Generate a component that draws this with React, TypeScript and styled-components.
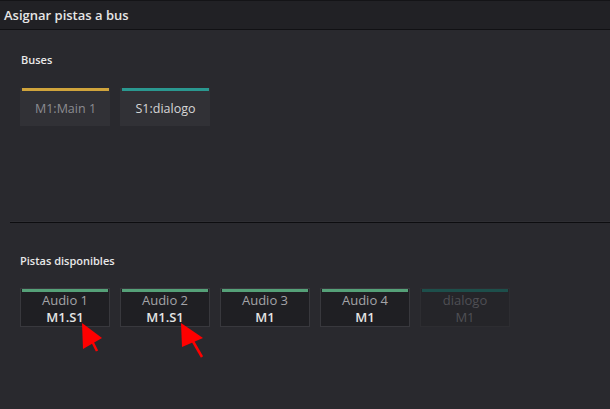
import React from 'react';
import styled, { createGlobalStyle } from 'styled-components';

const GlobalStyle = createGlobalStyle`
  html, body {
    margin: 0;
    padding: 0;
    background: #29292e;
  }
  body {
    font-family: "Open Sans", "DejaVu Sans", sans-serif;
  }
`;

const Window = styled.div`
  position: relative;
  width: 610px;
  height: 409px;
  background: #29292e;
  overflow: hidden;
`;

const TitleBar = styled.div`
  height: 28px;
  border-top: 1px solid #141417;
  border-bottom: 1px solid #111114;
  background: #212125;
  color: #e6e6e6;
  font-size: 13px;
  font-weight: 600;
  line-height: 28px;
  padding-left: 4px;
`;

const Section = styled.div<{ $top: number; $height: number }>`
  padding: ${(p) => p.$top}px 0 0 20px;
  height: ${(p) => p.$height}px;
  box-sizing: border-box;
`;

const Label = styled.div<{ $indent?: number }>`
  color: #e8e8e8;
  font-size: 11px;
  font-weight: 600;
  line-height: 16px;
  margin-left: ${(p) => p.$indent || 0}px;
`;

const Row = styled.div<{ $gap: number }>`
  display: flex;
  gap: 10px;
  margin-top: ${(p) => p.$gap}px;
`;

const BusTile = styled.div<{ $accent: string; $dim?: boolean }>`
  width: 90px;
  height: 38px;
  background: #313136;
  display: flex;
  flex-direction: column;
  box-sizing: border-box;
  padding: 0 1px 0 2px;
  color: ${(p) => (p.$dim ? '#8c8c91' : '#d6d6d6')};
  font-size: 12.5px;

  &::before {
    content: '';
    display: block;
    height: 3px;
    background: ${(p) => p.$accent};
  }
`;

const BusText = styled.div`
  flex: 1;
  display: flex;
  align-items: center;
  justify-content: center;
  padding-bottom: 1px;
`;

const Divider = styled.div`
  margin-left: 10px;
  height: 1px;
  background: #0d0d10;
  box-shadow: 0 -1px 0 #2e2e33;
`;

const TrackTile = styled.div<{ $off?: boolean }>`
  width: 90px;
  height: 39px;
  box-sizing: border-box;
  border: 1px solid ${(p) => (p.$off ? '#2d2d31' : '#38383d')};
  background: ${(p) => (p.$off ? '#252529' : '#1f1f23')};
  padding: 0 1px;
  text-align: center;
  font-size: 13px;
  line-height: 17px;

  &::before {
    content: '';
    display: block;
    height: 3px;
    background: ${(p) => (p.$off ? '#1d4f4b' : '#55a078')};
  }
`;

const TrackName = styled.div<{ $off?: boolean }>`
  color: ${(p) => (p.$off ? '#4f4f54' : '#a4a4a8')};
`;

const TrackBus = styled.div<{ $off?: boolean }>`
  color: ${(p) => (p.$off ? '#505055' : '#e4e4e4')};
  font-weight: ${(p) => (p.$off ? 400 : 600)};
`;

const Overlay = styled.svg`
  position: absolute;
  left: 0;
  top: 0;
  pointer-events: none;
`;

const buses = [
  { name: 'M1:Main 1', accent: '#d0a43c', dim: true },
  { name: 'S1:dialogo', accent: '#2a9890', dim: false },
];

const tracks = [
  { name: 'Audio 1', bus: 'M1.S1' },
  { name: 'Audio 2', bus: 'M1.S1' },
  { name: 'Audio 3', bus: 'M1' },
  { name: 'Audio 4', bus: 'M1' },
  { name: 'dialogo', bus: 'M1', off: true },
];

const App = () => {
  return (
    <Window>
      <GlobalStyle />
      <TitleBar>Asignar pistas a bus</TitleBar>
      <Section $top={22} $height={192}>
        <Label $indent={1}>Buses</Label>
        <Row $gap={20}>
          {buses.map((b) => (
            <BusTile key={b.name} $accent={b.accent} $dim={b.dim}>
              <BusText>{b.name}</BusText>
            </BusTile>
          ))}
        </Row>
      </Section>
      <Divider />
      <Section $top={30} $height={120}>
        <Label>Pistas disponibles</Label>
        <Row $gap={19}>
          {tracks.map((t) => (
            <TrackTile key={t.name} $off={t.off}>
              <TrackName $off={t.off}>{t.name}</TrackName>
              <TrackBus $off={t.off}>{t.bus}</TrackBus>
            </TrackTile>
          ))}
        </Row>
      </Section>
      <Overlay width="610" height="409">
        <polygon points="82,323 102,338 83,349" fill="#ff0000" />
        <line x1="91" y1="339" x2="97" y2="351" stroke="#ff0000" strokeWidth="2.5" />
        <polygon points="181,323 203,338 182,347" fill="#ff0000" />
        <line x1="191" y1="338" x2="202" y2="357" stroke="#ff0000" strokeWidth="2.5" />
      </Overlay>
    </Window>
  );
};

export default App;
